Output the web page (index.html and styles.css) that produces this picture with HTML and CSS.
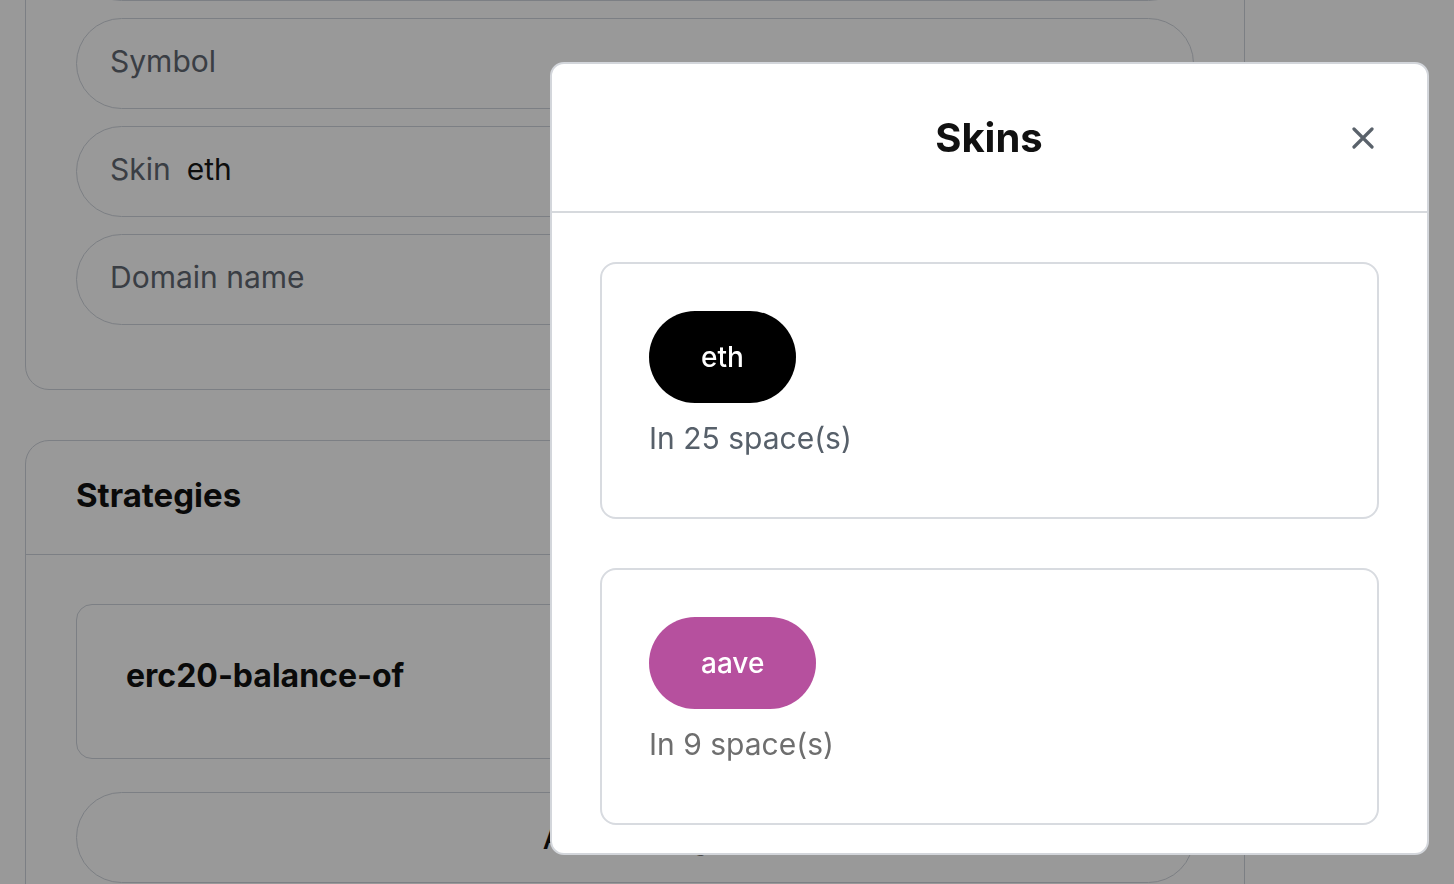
FILE: index.html
```html
<!DOCTYPE html>
<html lang="en">
<head>
<meta charset="utf-8">
<title>Skins</title>
<link rel="stylesheet" href="styles.css">
</head>
<body>
<div class="page">
  <section class="card card-form">
    <div class="fields">
      <div class="field"></div>
      <div class="field"><span class="label">Symbol</span></div>
      <div class="field"><span class="label">Skin</span><span class="value">eth</span></div>
      <div class="field"><span class="label">Domain name</span></div>
    </div>
  </section>
  <section class="card">
    <header class="card-head"><h3 class="card-title">Strategies</h3></header>
    <div class="card-body">
      <div class="strategy">erc20-balance-of</div>
      <button class="btn-pill" type="button">Add strategy</button>
    </div>
  </section>
</div>

<div class="overlay"></div>

<div class="modal" role="dialog">
  <header class="modal-head">
    <span></span>
    <h3 class="modal-title">Skins</h3>
    <button class="modal-close" type="button" aria-label="Close">
      <svg width="22" height="22" viewBox="0 0 22 22"><path d="M2 2 L20 20 M20 2 L2 20" stroke="#5a626b" stroke-width="3.2" stroke-linecap="round" fill="none"/></svg>
    </button>
  </header>
  <div class="modal-body">
    <div class="skin-card">
      <span class="skin-pill skin-eth">eth</span>
      <p class="skin-count count-a">In 25 space(s)</p>
    </div>
    <div class="skin-card">
      <span class="skin-pill skin-aave">aave</span>
      <p class="skin-count count-b">In 9 space(s)</p>
    </div>
  </div>
</div>
</body>
</html>
```

FILE: styles.css
```css
* { box-sizing: border-box; }
html, body { margin: 0; padding: 0; }
body {
  background: #ffffff;
  font-family: Inter, "Noto Sans", sans-serif;
  color: #111111;
  width: 1454px;
  height: 884px;
  overflow: hidden;
}

.page {
  margin-top: -141px;
  padding-left: 25px;
  width: 1245px;
  display: flex;
  flex-direction: column;
  gap: 50px;
}

.card {
  border: 1px solid #cfd4dc;
  border-radius: 24px;
  background: #ffffff;
}
.card-form { padding: 50px 50px 64px; }

.fields {
  display: flex;
  flex-direction: column;
  gap: 17px;
}
.field {
  height: 91px;
  border: 1px solid #cfd4dc;
  border-radius: 46px;
  display: flex;
  align-items: center;
  gap: 16px;
  padding: 0 0 5px 33px;
  font-size: 30px;
}
.label { color: #626872; }
.value { color: #181818; }

.card-head {
  height: 114px;
  border-bottom: 1px solid #cfd4dc;
  display: flex;
  align-items: center;
  padding: 0 50px 6px;
}
.card-title {
  margin: 0;
  font-size: 33px;
  font-weight: 700;
  color: #111;
}
.card-body {
  padding: 49px 50px;
  display: flex;
  flex-direction: column;
  gap: 33px;
}
.strategy {
  height: 155px;
  border: 1px solid #cfd4dc;
  border-radius: 16px;
  display: flex;
  align-items: center;
  padding: 0 49px 12px;
  font-size: 32px;
  font-weight: 700;
  color: #111;
}
.btn-pill {
  height: 91px;
  border: 1px solid #cfd4dc;
  border-radius: 46px;
  background: transparent;
  font-family: inherit;
  font-size: 30px;
  font-weight: 500;
  color: #111;
}

.overlay {
  position: fixed;
  inset: 0;
  background: rgba(0, 0, 0, 0.4);
}

.modal {
  position: fixed;
  left: 550px;
  top: 62px;
  width: 879px;
  height: 793px;
  background: #ffffff;
  border: 2px solid #d3d6db;
  border-radius: 14px;
  overflow: hidden;
  display: flex;
  flex-direction: column;
}
.modal-head {
  height: 149px;
  flex: none;
  border-bottom: 2px solid #d6d9dd;
  display: grid;
  grid-template-columns: 1fr auto 1fr;
  align-items: center;
  padding: 0 53px 0 52px;
}
.modal-title {
  margin: 0;
  font-size: 40px;
  font-weight: 700;
  color: #111111;
}
.modal-close {
  justify-self: end;
  width: 22px;
  height: 22px;
  padding: 0;
  border: 0;
  background: none;
  display: flex;
}
.modal-body {
  padding: 49px 48px 30px;
  display: flex;
  flex-direction: column;
  gap: 49px;
}
.skin-card {
  height: 257px;
  flex: none;
  border: 2px solid #d8dbe0;
  border-radius: 16px;
  padding: 47px 47px 55px;
  display: flex;
  flex-direction: column;
  align-items: flex-start;
}
.skin-pill {
  height: 92px;
  padding: 0 52px;
  border-radius: 46px;
  display: inline-flex;
  align-items: center;
  font-size: 28px;
  font-weight: 500;
  color: #ffffff;
}
.skin-eth { background: #000000; }
.skin-aave { background: #b6509e; }
.skin-count {
  margin: 11px 0 0;
  font-size: 30px;
  line-height: 48px;
}
.count-a { color: #57606a; }
.count-b { color: #6e6e6e; }
```
